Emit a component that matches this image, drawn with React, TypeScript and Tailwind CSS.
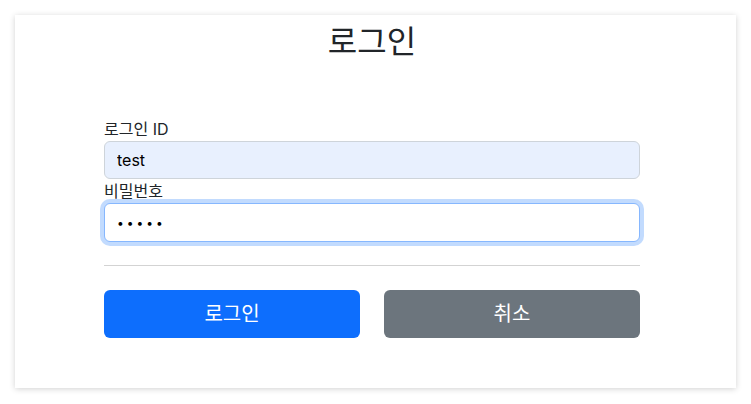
export default function App() {
  return (
    <main
      className="min-h-screen bg-white p-[15px] text-[#212529]"
      style={{ fontFamily: 'Inter, "Noto Sans CJK KR", sans-serif' }}
    >
      <div className="bg-white shadow-[0_1px_6px_rgba(0,0,0,0.18)] pt-[8px] pb-[50px] pl-[89px]">
        <div className="w-[536px]">
          <h2 className="text-center text-[32px] font-normal leading-[38px] mb-[56px]">로그인</h2>

          <form onSubmit={(e) => e.preventDefault()}>
            <label htmlFor="loginId" className="block text-[16px] leading-[24px]">
              로그인 ID
            </label>
            <input
              id="loginId"
              type="text"
              defaultValue="test"
              className="block w-full h-[38px] px-[12px] text-[16px] text-black bg-[#e8f0fe] border border-[#ced4da] rounded-[6px] outline-none"
            />

            <label htmlFor="password" className="block text-[16px] leading-[24px]">
              비밀번호
            </label>
            <input
              id="password"
              type="password"
              defaultValue="12345"
              className="block w-full h-[39px] px-[12px] text-[12px] tracking-[3px] text-black bg-white border border-[#86b7fe] rounded-[6px] outline-none shadow-[0_0_0_4px_rgba(13,110,253,0.25)]"
            />

            <hr className="mt-[23px] mb-[24px] border-0 border-t border-[#d3d3d3]" />

            <div className="grid grid-cols-2 gap-[24px]">
              <button
                type="submit"
                className="h-[48px] rounded-[6px] bg-[#0d6efd] text-white text-[20px] leading-[30px]"
              >
                로그인
              </button>
              <button
                type="button"
                className="h-[48px] rounded-[6px] bg-[#6c757d] text-white text-[20px] leading-[30px]"
              >
                취소
              </button>
            </div>
          </form>
        </div>
      </div>
    </main>
  );
}
